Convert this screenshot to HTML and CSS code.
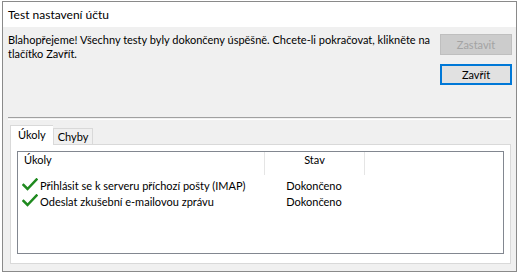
FILE: index.html
```html
<!DOCTYPE html>
<html lang="cs">
<head>
<meta charset="utf-8">
<title>Test nastavení účtu</title>
<link rel="stylesheet" href="styles.css">
</head>
<body>
<div class="window">
  <div class="titlebar">Test nastavení účtu</div>
  <div class="client">
    <div class="top">
      <p class="msg">Blahopřejeme! Všechny testy byly dokončeny úspěšně. Chcete-li pokračovat, klikněte na tlačítko Zavřít.</p>
      <div class="buttons">
        <button class="btn" disabled>Zastavit</button>
        <button class="btn btn-default">Zavřít</button>
      </div>
    </div>
    <div class="sep"></div>
    <div class="tabs">
      <div class="tab tab-active">Úkoly</div>
      <div class="tab">Chyby</div>
    </div>
    <div class="panel">
      <div class="list">
        <div class="list-head">
          <div class="col-task">Úkoly</div>
          <div class="col-state">Stav</div>
          <div class="col-rest"></div>
        </div>
        <div class="row">
          <div class="col-task"><svg class="check" viewBox="0 0 16 14" width="16" height="14"><polyline points="1.5,7 5.5,11 14.5,1.5" fill="none" stroke="#1f8a1f" stroke-width="2.5" stroke-linecap="square"/></svg>Přihlásit se k serveru příchozí pošty (IMAP)</div>
          <div class="col-state">Dokončeno</div>
        </div>
        <div class="row">
          <div class="col-task"><svg class="check" viewBox="0 0 16 14" width="16" height="14"><polyline points="1.5,7 5.5,11 14.5,1.5" fill="none" stroke="#1f8a1f" stroke-width="2.5" stroke-linecap="square"/></svg>Odeslat zkušební e-mailovou zprávu</div>
          <div class="col-state">Dokončeno</div>
        </div>
      </div>
    </div>
  </div>
</div>
</body>
</html>
```
FILE: styles.css
```css
html, body {
  margin: 0;
  padding: 0;
  background: #ffffff;
}
body {
  padding: 1px 0 0 2px;
  font-family: Lato, "Liberation Sans", sans-serif;
  font-size: 11px;
  color: #000;
}
.window {
  width: 513px;
  height: 269px;
  border: 1px solid #8a8a8a;
  display: flex;
  flex-direction: column;
  background: #f0f0f0;
}
.titlebar {
  height: 25px;
  background: #fff;
  line-height: 26px;
  padding-left: 5px;
  font-size: 12px;
}
.client {
  flex: 1;
  display: flex;
  flex-direction: column;
}
.top {
  height: 84px;
  padding-top: 6px;
  display: flex;
  justify-content: space-between;
}
.msg {
  margin: 0;
  padding-left: 5px;
  width: 428px;
  line-height: 14px;
}
.buttons {
  display: flex;
  flex-direction: column;
  gap: 9px;
  padding-top: 1px;
  padding-right: 4px;
}
.btn {
  width: 72px;
  height: 21px;
  font-family: inherit;
  font-size: 11px;
  padding: 0;
  background: #e1e1e1;
  border: 1px solid #adadad;
  color: #000;
}
.btn:disabled {
  background: #cccccc;
  border-color: #bfbfbf;
  color: #a3a3a3;
}
.btn-default {
  border: 2px solid #0078d7;
}
.sep {
  margin: 0 5px 0 5px;
  height: 1px;
  border-top: 1px solid #a0a0a0;
  border-bottom: 1px solid #fff;
}
.tabs {
  display: flex;
  align-items: flex-end;
  margin-top: 4px;
  padding-left: 7px;
  height: 20px;
  position: relative;
  z-index: 1;
}
.tab {
  height: 15px;
  line-height: 15px;
  padding: 0 4px;
  border: 1px solid #d9d9d9;
  border-bottom: none;
  background: #f0f0f0;
}
.tab-active {
  height: 19px;
  line-height: 18px;
  background: #fff;
  padding: 0 7px;
  margin-bottom: -1px;
  border-right: none;
}
.panel {
  margin: 0 5px 0 7px;
  height: 108px;
  border: 1px solid #d9d9d9;
  background: #fff;
  padding: 6px 6px 4px 6px;
}
.list {
  height: 101px;
  border: 1px solid #828790;
  background: #fff;
}
.list-head {
  display: flex;
  height: 23px;
}
.list-head .col-task,
.list-head .col-state {
  height: 23px;
  line-height: 16px;
  align-items: flex-start;
  border-right: 1px solid #e5e5e5;
}
.list-head .col-task {
  padding-top: 0;
}
.col-task {
  width: 240px;
  padding-left: 6px;
  display: flex;
  align-items: center;
  white-space: nowrap;
}
.col-state {
  width: 99px;
  text-align: center;
  white-space: nowrap;
}
.row {
  display: flex;
  height: 16px;
  line-height: 16px;
}
.list-head + .row {
  margin-top: 3px;
}
.row .col-task {
  padding-left: 4px;
  width: 242px;
}
.row .col-state {
  width: 100px;
}
.check {
  margin-right: 2px;
  margin-top: -2px;
  flex: none;
}
```
